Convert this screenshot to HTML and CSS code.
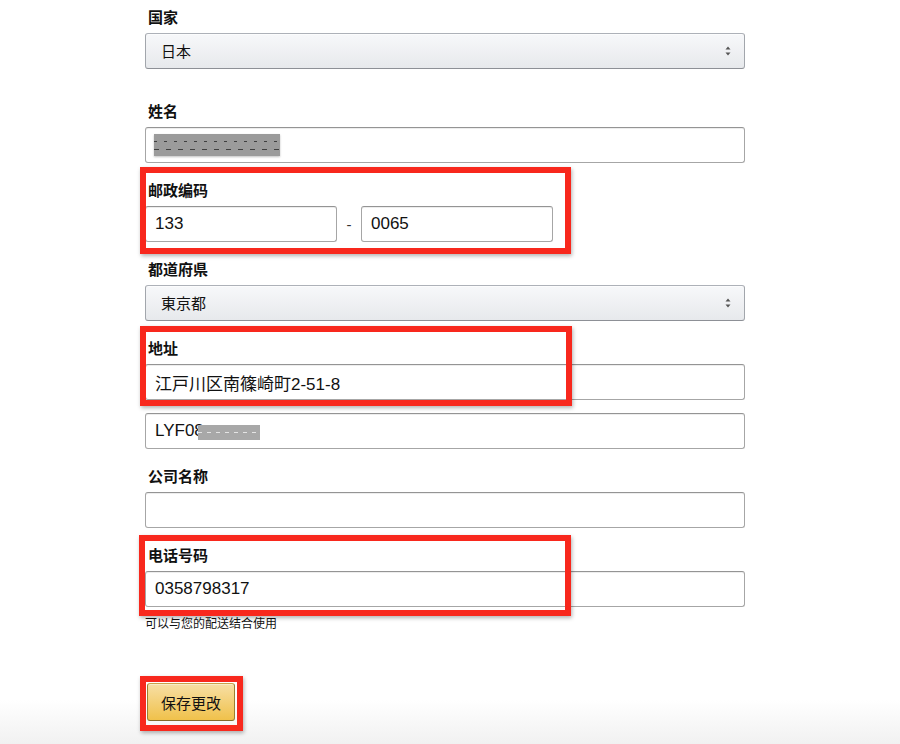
FILE: index.html
```html
<!DOCTYPE html>
<html lang="zh-CN">
<head>
  <meta charset="UTF-8" />
  <meta name="viewport" content="width=device-width, initial-scale=1" />
  <title>编辑地址</title>

  <!-- Internal CSS -->
  <link rel="stylesheet" href="styles.css">
</head>
<body>
  <div class="page">
    <div class="field first">
      <div class="label">国家</div>
      <div class="select">
        <span lang="ja">日本</span>
        <svg class="arrows" width="6" height="10" viewBox="0 0 6 10">
          <path d="M3 0.5 L5.5 3.5 H0.5 Z M3 9.5 L5.5 6.5 H0.5 Z" fill="#555" />
        </svg>
      </div>
    </div>

    <div class="field">
      <div class="label">姓名</div>
      <div class="input"><span class="redact name"></span></div>
    </div>

    <div class="field">
      <div class="label">邮政编码</div>
      <div class="postal">
        <div class="input">133</div>
        <span class="dash">-</span>
        <div class="input">0065</div>
      </div>
    </div>

    <div class="field">
      <div class="label">都道府県</div>
      <div class="select">
        <span lang="ja">東京都</span>
        <svg class="arrows" width="6" height="10" viewBox="0 0 6 10">
          <path d="M3 0.5 L5.5 3.5 H0.5 Z M3 9.5 L5.5 6.5 H0.5 Z" fill="#555" />
        </svg>
      </div>
    </div>

    <div class="field">
      <div class="label">地址</div>
      <div class="input" lang="ja">江戸川区南篠崎町2-51-8</div>
      <div class="input second">LYF08<span class="redact line2"></span></div>
    </div>

    <div class="field">
      <div class="label">公司名称</div>
      <div class="input"></div>
    </div>

    <div class="field last">
      <div class="label">电话号码</div>
      <div class="input">0358798317</div>
      <p class="hint">可以与您的配送结合使用</p>
    </div>

    <button class="save">保存更改</button>

    <!-- annotation boxes -->
    <div class="mark mark-postal"></div>
    <div class="mark mark-address"></div>
    <div class="mark mark-phone"></div>
    <div class="mark mark-save"></div>
  </div>
</body>
</html>
```

FILE: styles.css
```css
html {
  min-height: 744px;
  background: linear-gradient(to bottom, #fff 0, #fff 700px, #f1f1f1 744px);
}

body {
  margin: 0;
  font-family: "Liberation Sans", "Noto Sans CJK SC", sans-serif;
  color: #111;
}

[lang="ja"] {
  font-family: "Liberation Sans", "Noto Sans CJK JP", sans-serif;
}

.page {
  position: relative;
  width: 600px;
  margin-left: 145px;
  padding: 8px 0 20px;
}

.field {
  margin-bottom: 18px;
}
.field.first {
  margin-bottom: 33px;
}
.field.last {
  margin-bottom: 0;
}

.label {
  font-size: 15px;
  font-weight: bold;
  line-height: 20px;
  height: 20px;
  margin-bottom: 5px;
  padding-left: 3px;
}

.select {
  height: 36px;
  box-sizing: border-box;
  display: flex;
  align-items: center;
  justify-content: space-between;
  padding: 0 13px 2px 15px;
  border: 1px solid #adb1b8;
  border-color: #adb1b8 #a2a6ac #8d9096;
  border-radius: 3px;
  background: linear-gradient(to bottom, #f7f8fa, #e7e9ec);
  box-shadow: 0 1px 0 rgba(255,255,255,0.6) inset;
  font-size: 15px;
}
.arrows {
  margin-top: 2px;
}

.input {
  height: 36px;
  box-sizing: border-box;
  display: flex;
  align-items: center;
  padding: 0 9px;
  border: 1px solid #a6a6a6;
  border-top-color: #949494;
  border-radius: 3px;
  background: #fff;
  box-shadow: 0 1px 0 rgba(0,0,0,0.07) inset;
  font-size: 17px;
}
.input.second {
  margin-top: 13px;
}

.postal {
  display: flex;
  align-items: center;
  width: 408px;
}
.postal .input {
  width: 192px;
}
.dash {
  width: 24px;
  text-align: center;
  font-size: 15px;
  color: #333;
}

.redact {
  display: inline-block;
  background-color: #9b9b9b;
  background-image:
    repeating-linear-gradient(90deg, #3f3f3f 0 3px, transparent 3px 10px),
    repeating-linear-gradient(90deg, #3f3f3f 0 5px, transparent 5px 12px);
  background-size: 100% 1px, 100% 1px;
  background-position: 0 7px, 0 15px;
  background-repeat: no-repeat;
}
.redact.name {
  width: 126px;
  height: 22px;
  margin-left: -1px;
  box-shadow: 0 1px 2px rgba(0,0,0,0.25);
}
.redact.line2 {
  width: 62px;
  height: 15px;
  margin-left: -6px;
  margin-top: 2px;
  background-color: #a8a8a8;
  background-image: repeating-linear-gradient(90deg, #e4e4e4 0 4px, transparent 4px 9px);
  background-size: 100% 1px;
  background-position: 0 7px;
}

.hint {
  margin: 9px 0 0;
  font-size: 12px;
  line-height: 16px;
}

.save {
  display: block;
  margin: 51px 0 0 2px;
  width: 88px;
  height: 38px;
  padding: 0;
  border: 1px solid #a88734;
  border-color: #c9a24a #9c7e31 #846a29;
  border-radius: 3px;
  background: linear-gradient(to bottom, #f7dfa5, #f0c14b);
  box-shadow: 0 1px 0 rgba(255,255,255,0.4) inset;
  font-family: "Liberation Sans", "Noto Sans CJK SC", sans-serif;
  font-size: 15px;
  color: #111;
  cursor: pointer;
}

.mark {
  position: absolute;
  box-sizing: border-box;
  border: 6px solid #f8281d;
  box-shadow: 1px 2px 4px rgba(0,0,0,0.3);
  pointer-events: none;
}
.mark-postal {
  left: -5px;
  top: 167px;
  width: 431px;
  height: 87px;
}
.mark-address {
  left: -5px;
  top: 326px;
  width: 432px;
  height: 80px;
}
.mark-phone {
  left: -6px;
  top: 535px;
  width: 432px;
  height: 81px;
}
.mark-save {
  left: -5px;
  top: 676px;
  width: 103px;
  height: 55px;
}
```
